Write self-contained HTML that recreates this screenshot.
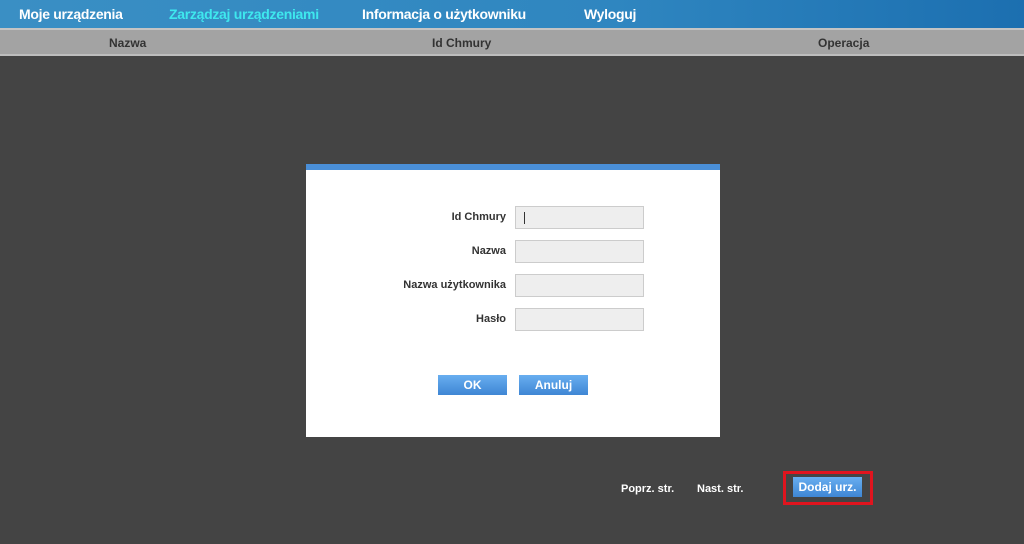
<!DOCTYPE html>
<html><head><meta charset="utf-8"><style>
*{margin:0;padding:0;box-sizing:border-box}
body{width:1024px;height:544px;background:#444;font-family:"Liberation Sans",sans-serif;position:relative;overflow:hidden}
.hdr{position:absolute;left:0;top:0;width:1024px;height:28px;background:linear-gradient(90deg,#3a8fc4 0%,#2f86c0 60%,#1c6fb0 100%)}
.hdr span{position:absolute;top:6px;font-size:14px;font-weight:bold;color:#fff;letter-spacing:-0.3px}
.bar{position:absolute;left:0;top:28px;width:1024px;height:28px;background:#a3a3a3;border-top:2px solid #c4c4c4;border-bottom:2px solid #bdbdbd}
.bar span{position:absolute;top:6px;font-size:12px;font-weight:bold;color:#333}
.modal{position:absolute;left:306px;top:164px;width:414px;height:273px;background:#fff;border-top:6px solid #4a8fd8}
.lbl{position:absolute;font-size:11px;font-weight:bold;color:#333;text-align:right;width:200px}
.inp{position:absolute;left:209px;width:129px;height:23px;background:#eee;border:1px solid #ccc}
.btn{position:absolute;height:20px;background:linear-gradient(#68aef0,#3f86d4);color:#fff;font-size:12px;font-weight:bold;text-align:center;line-height:20px}
.nav{position:absolute;top:483px;font-size:11px;font-weight:bold;color:#fff}
</style></head><body>
<div class="hdr">
<span style="left:19px">Moje urządzenia</span>
<span style="left:169px;color:#3ee8ee">Zarządzaj urządzeniami</span>
<span style="left:362px">Informacja o użytkowniku</span>
<span style="left:584px">Wyloguj</span>
</div>
<div class="bar">
<span style="left:109px">Nazwa</span>
<span style="left:432px">Id Chmury</span>
<span style="left:818px">Operacja</span>
</div>
<div class="modal">
<div class="lbl" style="left:0;top:41px">Id Chmury</div>
<div class="inp" style="top:36px"><div style="position:absolute;left:8px;top:5px;width:1px;height:12px;background:#333"></div></div>
<div class="lbl" style="left:0;top:75px">Nazwa</div>
<div class="inp" style="top:70px"></div>
<div class="lbl" style="left:0;top:109px">Nazwa użytkownika</div>
<div class="inp" style="top:104px"></div>
<div class="lbl" style="left:0;top:143px">Hasło</div>
<div class="inp" style="top:138px"></div>
<div class="btn" style="left:132px;top:205px;width:69px">OK</div>
<div class="btn" style="left:213px;top:205px;width:69px">Anuluj</div>
</div>
<div class="nav" style="left:621px">Poprz. str.</div>
<div class="nav" style="left:697px">Nast. str.</div>
<div style="position:absolute;left:783px;top:471px;width:90px;height:34px;border:3px solid #e0141e"></div>
<div class="btn" style="left:793px;top:477px;width:69px">Dodaj urz.</div>
</body></html>
